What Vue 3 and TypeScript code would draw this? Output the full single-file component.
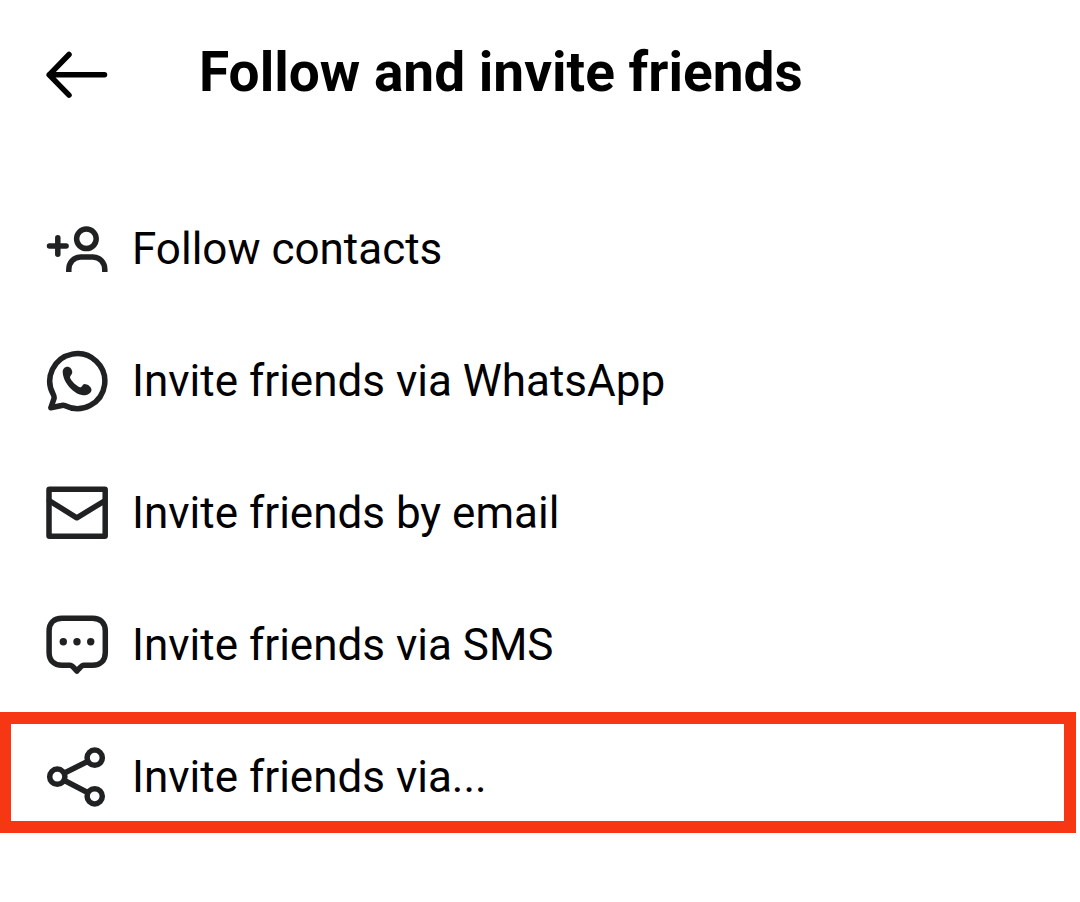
<script setup lang="ts">
type IconName = 'contacts' | 'whatsapp' | 'email' | 'sms' | 'share'

interface InviteOption {
  icon: IconName
  label: string
  highlighted?: boolean
}

const options: InviteOption[] = [
  { icon: 'contacts', label: 'Follow contacts' },
  { icon: 'whatsapp', label: 'Invite friends via WhatsApp' },
  { icon: 'email', label: 'Invite friends by email' },
  { icon: 'sms', label: 'Invite friends via SMS' },
  { icon: 'share', label: 'Invite friends via...', highlighted: true },
]
</script>

<template>
  <main class="screen">
    <header class="header">
      <button class="back" type="button" aria-label="Back">
        <svg class="icon arrow" viewBox="0 0 64 64" aria-hidden="true">
          <path d="M24 14.5 4.2 34.8l19.800 20.300M4.200 34.800H59.500" />
        </svg>
      </button>
      <h1 class="title">Follow and invite friends</h1>
    </header>

    <ul class="options">
      <li
        v-for="option in options"
        :key="option.icon"
        class="item"
        :class="{ highlighted: option.highlighted }"
      >
        <button class="option" type="button">
          <svg class="icon" viewBox="0 0 64 64" aria-hidden="true">
            <g v-if="option.icon === 'contacts'">
              <path d="M4.5 30h16.600M12.800 21.700v16.600" />
              <circle cx="41.4" cy="22.8" r="9.8" />
              <path class="butt" d="M23.8 56v-2.500c0-7 5-12.600 12-12.600h12c7 0 12 5.600 12 12.600V56" />
            </g>
            <g v-else-if="option.icon === 'whatsapp'">
              <path d="M5.8 59.8 9 50.700Q9.500 48.700 8.300 46.500A27.500 27.500 0 1 1 20.200 57.800Q18.500 57 16.700 57.500Z" />
              <path
                class="solid"
                d="M17.7 23.8C17.7 21 19.8 18.8 22.3 18.8C25 18.8 27 21 27.3 24.3C27.4 26.5 24.8 27.8 25 29.5C25.500 32.500 32.500 39 35.300 39.300C37.200 39.400 37.500 36 39.500 36C42.500 36 46.500 39 46.500 41.700C46.500 44.800 42.500 47.300 38.500 47.300C29.500 47 17.700 34.500 17.700 23.800Z"
              />
            </g>
            <g v-else-if="option.icon === 'email'">
              <rect x="4" y="9.2" width="56.2" height="47" rx="0.5" />
              <path d="M4.5 20.8 31.8 37.8 59.7 20.8" />
            </g>
            <g v-else-if="option.icon === 'sms'">
              <path d="M17 6.2H47.5C55.5 6.2 60.3 11 60.3 19V40.5C60.3 48.5 55.5 53.3 47.5 53.3H39C36.5 53.3 35.7 55 31.9 59C28 55 27.3 53.3 24.8 53.3H17C9 53.3 4.1 48.5 4.1 40.5V19C4.1 11 9 6.2 17 6.2Z" />
              <circle class="solid" cx="18.3" cy="29.7" r="3.7" />
              <circle class="solid" cx="32" cy="29.7" r="3.7" />
              <circle class="solid" cx="45.7" cy="29.7" r="3.7" />
            </g>
            <g v-else>
              <circle cx="12.3" cy="32.7" r="7.6" />
              <circle cx="49.7" cy="13.7" r="7.6" />
              <circle cx="49.7" cy="52.3" r="7.6" />
              <path class="butt" d="M19 29.2 43 17.2M19 36.2 43 48.8" />
            </g>
          </svg>
          <span class="label">{{ option.label }}</span>
        </button>
      </li>
    </ul>
  </main>
</template>

<style>
body {
  margin: 0;
  background: #ffffff;
}
</style>

<style scoped>
.screen {
  min-height: 100vh;
  box-sizing: border-box;
  background: #ffffff;
  color: #000000;
  font-family: Roboto, "Liberation Sans", sans-serif;
}

.header {
  display: flex;
  align-items: center;
  gap: 90px;
  padding: 40px 45px 78px;
}

.back,
.option {
  border: 0;
  padding: 0;
  background: transparent;
  color: inherit;
  font: inherit;
  cursor: pointer;
}

.back {
  display: flex;
}

.icon {
  display: block;
  flex: none;
  width: 64px;
  height: 64px;
  fill: none;
  stroke: #202122;
  stroke-width: 5.5;
  stroke-linecap: round;
  stroke-linejoin: round;
}

.arrow {
  stroke: #000000;
}

.butt {
  stroke-linecap: butt;
}

.solid {
  fill: #202122;
  stroke: none;
}

.title {
  margin: 0;
  font-size: 55px;
  line-height: 64px;
  font-weight: 700;
}

.options {
  margin: 0;
  padding: 0;
  list-style: none;
}

.item {
  padding: 0 45px;
}

.option {
  display: flex;
  align-items: center;
  gap: 23px;
  width: 100%;
  min-height: 132px;
  text-align: left;
}

.label {
  padding-top: 2px;
  font-size: 44px;
  line-height: 52px;
}

.highlighted {
  margin: 2px 4px 0 0;
  border: 12px solid #f73613;
  border-left-width: 11px;
  padding: 8px 34px 1px;
}

.highlighted .option {
  min-height: 88px;
}
</style>
